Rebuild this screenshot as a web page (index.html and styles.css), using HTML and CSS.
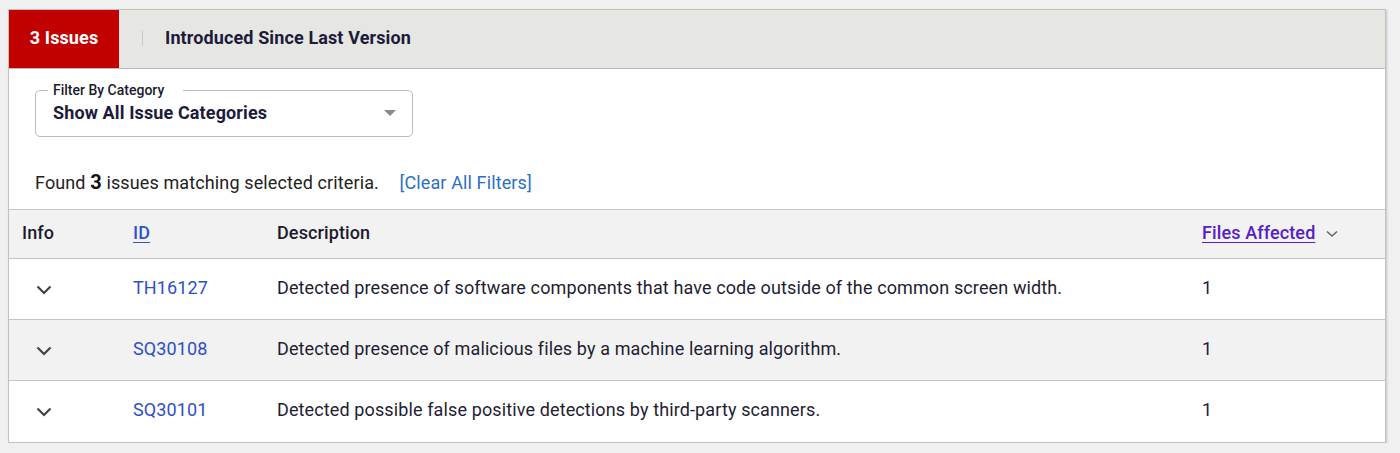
FILE: index.html
```html
<!DOCTYPE html>
<html>
<head>
<meta charset="utf-8">
<link rel="stylesheet" href="styles.css">
</head>
<body>
<div class="card">
  <div class="tabbar">
    <div class="tab-active">3 Issues</div>
    <div class="sep"></div>
    <div class="tab-title">Introduced Since Last Version</div>
  </div>
  <div class="filters">
    <fieldset class="select">
      <legend>Filter By Category</legend>
      <div class="select-row">
        <span class="select-value">Show All Issue Categories</span>
        <span class="caret"></span>
      </div>
    </fieldset>
  </div>
  <div class="found">Found <b>3</b> issues matching selected criteria. <a class="clear" href="#">[Clear All Filters]</a></div>
  <table class="issues">
    <thead>
      <tr>
        <th class="c-info">Info</th>
        <th class="c-id"><a class="sortlink" href="#">ID</a></th>
        <th class="c-desc">Description</th>
        <th class="c-files"><a class="sortlink visited" href="#">Files Affected</a><svg class="sort-ic" width="12" height="8" viewBox="0 0 12 8"><path d="M1 1.5 L6 6 L11 1.5" fill="none" stroke="#666" stroke-width="1.6"/></svg></th>
      </tr>
    </thead>
    <tbody>
      <tr>
        <td class="c-info"><svg class="chev" width="16" height="10" viewBox="0 0 16 10"><path d="M1.5 1.5 L8 8 L14.5 1.5" fill="none" stroke="#444" stroke-width="2.2"/></svg></td>
        <td class="c-id"><a class="idlink" href="#">TH16127</a></td>
        <td class="c-desc">Detected presence of software components that have code outside of the common screen width.</td>
        <td class="c-files">1</td>
      </tr>
      <tr class="alt">
        <td class="c-info"><svg class="chev" width="16" height="10" viewBox="0 0 16 10"><path d="M1.5 1.5 L8 8 L14.5 1.5" fill="none" stroke="#444" stroke-width="2.2"/></svg></td>
        <td class="c-id"><a class="idlink" href="#">SQ30108</a></td>
        <td class="c-desc">Detected presence of malicious files by a machine learning algorithm.</td>
        <td class="c-files">1</td>
      </tr>
      <tr>
        <td class="c-info"><svg class="chev" width="16" height="10" viewBox="0 0 16 10"><path d="M1.5 1.5 L8 8 L14.5 1.5" fill="none" stroke="#444" stroke-width="2.2"/></svg></td>
        <td class="c-id"><a class="idlink" href="#">SQ30101</a></td>
        <td class="c-desc">Detected possible false positive detections by third-party scanners.</td>
        <td class="c-files">1</td>
      </tr>
    </tbody>
  </table>
</div>
</body>
</html>
```

FILE: styles.css
```css
html, body {
  margin: 0;
  padding: 0;
  background: #f0f0f0;
  font-family: Roboto, "Liberation Sans", Arial, sans-serif;
  color: #1f1d33;
  letter-spacing: 0.12px;
}
body {
  padding: 9px 14px 0 8px;
}
.card {
  width: 1376px;
  background: #fff;
  border: 1px solid #c2c0c0;
  box-shadow: 1px 1px 2px rgba(0,0,0,0.18);
}
.tabbar {
  display: flex;
  align-items: center;
  height: 58px;
  background: #e6e6e3;
  border-bottom: 1px solid #bdbbbb;
}
.tab-active {
  width: 110px;
  height: 100%;
  box-sizing: border-box;
  padding-bottom: 3px;
  background: #c10000;
  color: #fff;
  font-weight: 700;
  font-size: 18px;
  display: flex;
  align-items: center;
  justify-content: center;
}
.sep {
  width: 1px;
  height: 15px;
  background: #c9c9c9;
  margin-left: 23px;
  margin-bottom: 2px;
}
.tab-title {
  margin-left: 22px;
  margin-bottom: 3px;
  font-size: 18px;
  font-weight: 700;
  color: #1c1b3b;
}
.filters {
  padding: 14px 0 0 26px;
}
.select {
  width: 378px;
  box-sizing: border-box;
  height: 54px;
  margin: 0;
  padding: 0 16px 0 17px;
  border: 1px solid #bdbbbb;
  border-radius: 5px;
}
.select legend {
  font-size: 14px;
  font-weight: 500;
  color: #1c1b2e;
  padding: 0 19px 0 5px;
  margin-left: -5px;
  line-height: 14px;
  letter-spacing: 0;
}
.select-row {
  display: flex;
  align-items: center;
  justify-content: space-between;
  margin-top: 5px;
}
.select-value {
  font-size: 18px;
  font-weight: 700;
  color: #1c1b3b;
}
.caret {
  width: 0;
  height: 0;
  border-left: 6.5px solid transparent;
  border-right: 6.5px solid transparent;
  border-top: 6.5px solid #8a8a8a;
  margin-right: 0;
}
.found {
  padding: 35px 0 0 26px;
  height: 37px;
  font-size: 18px;
  color: #222;
  line-height: 20px;
}
.found b {
  font-size: 20px;
  font-weight: 700;
  color: #111;
}
.clear {
  color: #2c6fc2;
  text-decoration: none;
  margin-left: 16px;
}
.issues {
  width: 100%;
  border-collapse: collapse;
  table-layout: fixed;
  font-size: 18px;
}
.issues th, .issues td {
  text-align: left;
  padding: 0 0 3px 13px;
  vertical-align: middle;
}
.issues thead tr {
  height: 49px;
  background: #f2f2f2;
  border-top: 1px solid #c6c4c4;
  border-bottom: 1px solid #c6c4c4;
}
.issues th {
  font-weight: 500;
  color: #1c1b2e;
}
.issues tbody tr {
  height: 61px;
  border-bottom: 1px solid #c6c4c4;
}
.issues tbody tr:last-child {
  border-bottom: none;
}
.issues tbody tr.alt {
  background: #f2f2f2;
}
.c-info { width: 98px; }
.c-id { width: 131px; }
.c-desc { width: 912px; }
.issues td.c-desc, .issues td.c-files {
  color: #1f1d33;
}
.sortlink {
  color: #2f55c9;
  text-decoration: underline;
  text-underline-offset: 3px;
}
.sortlink.visited {
  color: #5520c8;
}
.sort-ic {
  margin-left: 11px;
  vertical-align: middle;
}
.chev {
  display: block;
  margin-left: 14px;
  margin-top: 4px;
}
.idlink {
  color: #2f4fc4;
  text-decoration: none;
}
```
